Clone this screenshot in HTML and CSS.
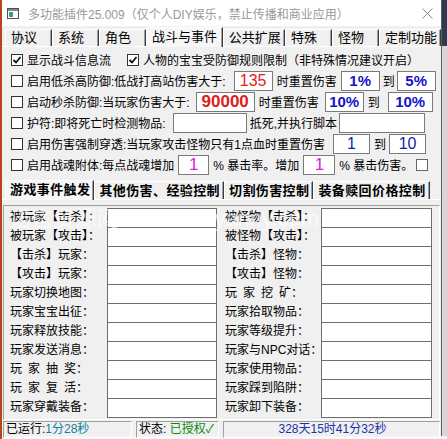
FILE: index.html
```html
<!DOCTYPE html>
<html lang="zh">
<head>
<meta charset="utf-8">
<link rel="stylesheet" href="styles.css">
</head>
<body>
<div class="win">
  <div class="titlebar">
    <svg class="appicon" width="12" height="11" viewBox="0 0 12 11"><rect x="0.5" y="0.5" width="11" height="10" fill="#fff" stroke="#505050"/><rect x="1" y="1" width="10" height="2" fill="#7a8794"/><rect x="2" y="4" width="4" height="5" fill="#3f9a8a"/></svg>
    <span class="title">多功能插件25.009（仅个人DIY娱乐，禁止传播和商业应用）</span>
    <svg class="close" width="11" height="11" viewBox="0 0 11 11"><path d="M0.5 0.5 L10.5 10.5 M10.5 0.5 L0.5 10.5" stroke="#8a8a8a" stroke-width="1"/></svg>
  </div>
  <div class="tabs">
    <div class="tab">协议</div>
    <div class="tab">系统</div>
    <div class="tab">角色</div>
    <div class="tab active">战斗与事件</div>
    <div class="tab">公共扩展</div>
    <div class="tab">特殊</div>
    <div class="tab">怪物</div>
    <div class="tab">定制功能</div>
  </div>
  <div class="options">
    <div class="opt">
      <span class="cb checked"><svg width="10" height="10" viewBox="0 0 10 10"><path d="M1.5 5 L4 7.5 L8.5 2" fill="none" stroke="#111" stroke-width="1.8"/></svg></span>
      <span class="lbl">显示战斗信息流</span>
      <span class="cb checked cb2"><svg width="10" height="10" viewBox="0 0 10 10"><path d="M1.5 5 L4 7.5 L8.5 2" fill="none" stroke="#111" stroke-width="1.8"/></svg></span>
      <span class="lbl">人物的宝宝受防御规则限制（非特殊情况建议开启）</span>
    </div>
    <div class="opt">
      <span class="cb"></span>
      <span class="lbl">启用低杀高防御:低战打高站伤害大于:</span>
      <span class="box w39 red ml8">135</span>
      <span class="txt ml4">时重置伤害</span>
      <span class="box w39 blue bold ml4">1%</span>
      <span class="txt ml3">到</span>
      <span class="box w39 blue bold ml2">5%</span>
    </div>
    <div class="opt">
      <span class="cb"></span>
      <span class="lbl">启动秒杀防御:当玩家伤害大于:</span>
      <span class="box w59 red big bold ml6">90000</span>
      <span class="txt ml4">时重置伤害</span>
      <span class="box w39 blue bold ml6">10%</span>
      <span class="txt ml4">到</span>
      <span class="box w45 blue bold ml8">10%</span>
    </div>
    <div class="opt">
      <span class="cb"></span>
      <span class="lbl">护符:即将死亡时检测物品:</span>
      <span class="box w74 ml7"></span>
      <span class="txt ml3">抵死,并执行脚本</span>
      <span class="box w86 ml2"></span>
    </div>
    <div class="opt">
      <span class="cb"></span>
      <span class="lbl">启用伤害强制穿透:当玩家攻击怪物只有1点血时重置伤害</span>
      <span class="box w37 navy ml8">1</span>
      <span class="txt ml4">到</span>
      <span class="box w37 navy ml3">10</span>
    </div>
    <div class="opt">
      <span class="cb"></span>
      <span class="lbl">启用战魂附体:每点战魂增加</span>
      <span class="box w31 magenta ml4">1</span>
      <span class="txt ml4">% 暴击率。增加</span>
      <span class="box w32 magenta ml4">1</span>
      <span class="txt ml4">% 暴击伤害。</span>
      <span class="cb cb-end"></span>
    </div>
  </div>
  <div class="subtabs">
    <div class="stab active">游戏事件触发</div>
    <div class="stab">其他伤害、经验控制</div>
    <div class="stab">切割伤害控制</div>
    <div class="stab">装备赎回价格控制</div>
  </div>
  <div class="panel">
    <div class="grid">
      <span class="glbl">被玩家【击杀】：</span><span class="field"></span><span class="glbl">被怪物【击杀】：</span><span class="field"></span>
      <span class="glbl">被玩家【攻击】：</span><span class="field"></span><span class="glbl">被怪物【攻击】：</span><span class="field"></span>
      <span class="glbl">【击杀】玩家：</span><span class="field"></span><span class="glbl">【击杀】怪物：</span><span class="field"></span>
      <span class="glbl">【攻击】玩家：</span><span class="field"></span><span class="glbl">【攻击】怪物：</span><span class="field"></span>
      <span class="glbl">玩家切换地图：</span><span class="field"></span><span class="glbl">玩&ensp;家&ensp;挖&ensp;矿：</span><span class="field"></span>
      <span class="glbl">玩家宝宝出征：</span><span class="field"></span><span class="glbl">玩家拾取物品：</span><span class="field"></span>
      <span class="glbl">玩家释放技能：</span><span class="field"></span><span class="glbl">玩家等级提升：</span><span class="field"></span>
      <span class="glbl">玩家发送消息：</span><span class="field"></span><span class="glbl">玩家与NPC对话：</span><span class="field"></span>
      <span class="glbl">玩&ensp;家&ensp;抽&ensp;奖：</span><span class="field"></span><span class="glbl">玩家使用物品：</span><span class="field"></span>
      <span class="glbl">玩&ensp;家&ensp;复&ensp;活：</span><span class="field"></span><span class="glbl">玩家踩到陷阱：</span><span class="field"></span>
      <span class="glbl">玩家穿戴装备：</span><span class="field"></span><span class="glbl">玩家卸下装备：</span><span class="field"></span>
    </div>
    <div class="watermark">诺言资源网 www.nuoyanny.com</div>
  </div>
  <div class="status">
    <div class="sp sp1">已运行:<span class="teal">1分28秒</span></div>
    <div class="sp sp2">状态: <span class="green">已授权✓</span></div>
    <div class="sp sp3"><span class="navytime">328天15时41分32秒</span></div>
  </div>
</div>
</body>
</html>
```

FILE: styles.css
```css
html, body {
  margin: 0;
  padding: 0;
}
body {
  width: 447px;
  height: 439px;
  overflow: hidden;
  background:
    linear-gradient(to right, #b9441c 0, #b9441c 2px, transparent 2px),
    linear-gradient(to bottom, #2e3b4e 0, #2e3b4e 46px, #d8d8d8 46px, #d8d8d8 436px, #f4f4f4 436px);
  font-family: "Liberation Sans", "Noto Sans CJK SC", sans-serif;
  font-size: 12px;
  color: #000;
}
.win {
  margin-left: 2px;
  width: 440px;
  height: 436px;
  background: #f0f0f0;
  border-right: 1px solid #5f5f5f;
  box-sizing: border-box;
  display: flex;
  flex-direction: column;
}
.titlebar {
  height: 26px;
  flex: none;
  background: #fff;
  display: flex;
  align-items: center;
}
.appicon {
  margin-left: 5px;
  flex: none;
}
.title {
  margin-left: 9px;
  color: #999;
  font-size: 12px;
  white-space: nowrap;
}
.close {
  margin-left: auto;
  margin-right: 8px;
  flex: none;
}
.tabs {
  height: 21px;
  flex: none;
  display: flex;
  align-items: flex-end;
  padding-left: 3px;
  border-bottom: 1px solid #fff;
  box-sizing: border-box;
}
.tab {
  height: 17px;
  line-height: 16px;
  min-width: 47px;
  box-sizing: border-box;
  padding: 0 4px 0 5px;
  font-size: 13px;
  white-space: nowrap;
  border-top: 1px solid #fff;
  border-left: 1px solid #fff;
  border-right: 1px solid #3c3c3c;
  box-shadow: inset -1px 0 #a0a0a0;
}
.tab.active {
  height: 20px;
  margin-bottom: -1px;
  line-height: 17px;
  padding: 0 6px 0 5px;
  background: #f7f7f7;
}
.options {
  flex: none;
  padding-top: 2px;
}
.opt {
  height: 21px;
  display: flex;
  align-items: center;
  white-space: nowrap;
}
.cb {
  width: 12px;
  height: 12px;
  box-sizing: border-box;
  border: 1px solid #333;
  background: #fff;
  margin-left: 9px;
  flex: none;
  display: flex;
  align-items: center;
  justify-content: center;
}
.cb svg {
  display: block;
}
.cb2 {
  margin-left: 16px;
}
.cb-end {
  margin-left: 3px;
  border-color: #666;
}
.lbl {
  margin-left: 4px;
}
.box {
  height: 20px;
  box-sizing: border-box;
  border: 1px solid #7a7a7a;
  background: #fff;
  display: inline-flex;
  align-items: center;
  justify-content: center;
  font-size: 16px;
  flex: none;
}
.w31 { width: 31px; }
.w32 { width: 32px; }
.w37 { width: 37px; }
.w39 { width: 39px; }
.w45 { width: 45px; }
.w59 { width: 59px; }
.w74 { width: 74px; }
.w86 { width: 86px; }
.ml2 { margin-left: 2px; }
.ml3 { margin-left: 3px; }
.ml4 { margin-left: 4px; }
.ml6 { margin-left: 6px; }
.ml7 { margin-left: 7px; }
.ml8 { margin-left: 8px; }
.red { color: #e01c1c; }
.blue { color: #1414c8; font-size: 15px; }
.navy { color: #1c1c9c; }
.magenta { color: #e020e0; font-size: 17px; }
.bold { font-weight: bold; }
.big { font-size: 17px; }
.subtabs {
  flex: none;
  margin-top: 4px;
  height: 21px;
  display: flex;
  align-items: flex-end;
  padding-left: 3px;
  border-bottom: 1px solid #fff;
  box-sizing: border-box;
}
.stab {
  height: 18px;
  line-height: 17px;
  box-sizing: border-box;
  padding: 0 3px 0 4px;
  font-size: 13px;
  font-weight: bold;
  letter-spacing: 0.4px;
  white-space: nowrap;
  border-top: 1px solid #fff;
  border-left: 1px solid #fff;
  border-right: 1px solid #3c3c3c;
  box-shadow: inset -1px 0 #a0a0a0;
}
.stab.active {
  height: 20px;
  margin-bottom: -1px;
  background: #f7f7f7;
}
.panel {
  position: relative;
  flex: none;
  margin-top: 5px;
  margin-left: 1px;
  width: 437px;
  height: 215px;
  box-sizing: border-box;
  border: 1px solid #a0a0a0;
  border-right-color: #fff;
  border-bottom-color: #fff;
  padding: 2px 0 0 6px;
  overflow: hidden;
}
.grid {
  display: grid;
  grid-template-columns: 97px 110px 104px 111px;
  grid-auto-rows: 19px;
}
.glbl {
  line-height: 19px;
  white-space: nowrap;
  font-size: 12px;
}
.grid .glbl:nth-child(4n+3) {
  padding-left: 8px;
}
.field {
  height: 20px;
  box-sizing: border-box;
  border: 1px solid #6e6e6e;
  background: #fff;
}
.watermark {
  position: absolute;
  left: 5px;
  top: 0px;
  font-size: 22px;
  line-height: 26px;
  color: rgba(255, 255, 255, 0.65);
  white-space: nowrap;
  pointer-events: none;
}
.status {
  flex: none;
  margin-top: 1px;
  height: 17px;
  display: flex;
  gap: 4px;
  padding-left: 1px;
}
.sp {
  height: 17px;
  box-sizing: border-box;
  border-top: 1px solid #a0a0a0;
  border-left: 1px solid #a0a0a0;
  border-bottom: 1px solid #fff;
  border-right: 1px solid #fff;
  line-height: 15px;
  padding-left: 2px;
  white-space: nowrap;
  font-size: 12px;
}
.sp1 { width: 129px; }
.sp2 { width: 83px; }
.sp3 {
  flex: 1;
  text-align: center;
  margin-right: 1px;
}
.teal { color: #147f9e; }
.green { color: #0a8a0a; }
.navytime { color: #2232a8; }
```
